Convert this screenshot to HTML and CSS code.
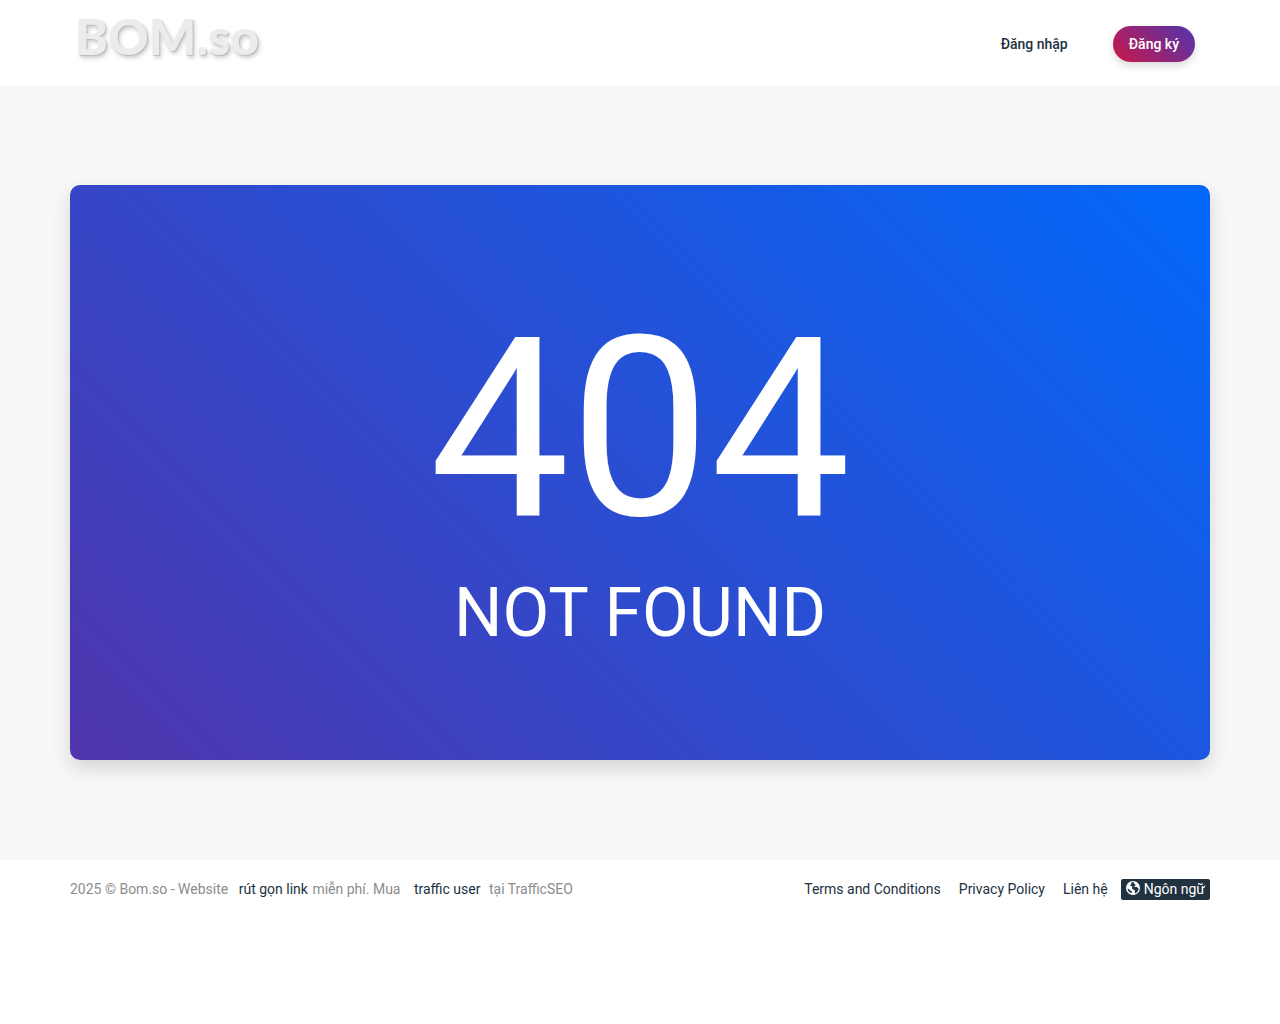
FILE: index.html
```html
<!DOCTYPE html>
<html lang="vi">
<head>
    <meta charset="UTF-8">
    <meta name="viewport" content="width=device-width, initial-scale=1.0">
    <title>404 Not Found - Bom.so</title>
    <link rel="stylesheet" href="styles.css">
</head>
<body>
    <header class="header">
        <div class="container header-inner">
            <a href="#" class="logo">BOM.so</a>
            <nav class="nav">
                <a href="#" class="nav-link">Đăng nhập</a>
                <a href="#" class="btn-register">Đăng ký</a>
            </nav>
        </div>
    </header>

    <main class="main">
        <div class="container">
            <div class="error-box">
                <h1>404</h1>
                <h2>NOT FOUND</h2>
            </div>
        </div>
    </main>

    <footer class="container footer">
        <div class="copyright">
            2025 © Bom.so - Website <a href="#" class="link-shorten">rút gọn link</a> miễn phí. Mua <a href="#" class="link-traffic">traffic user</a> tại TrafficSEO
        </div>
        <div class="footer-links">
            <a href="#">Terms and Conditions</a>
            <a href="#">Privacy Policy</a>
            <a href="#">Liên hệ</a>
            <button type="button" class="btn-lang">
                <svg class="globe" viewBox="0 0 16 16" aria-hidden="true">
                    <circle cx="8" cy="8" r="8" fill="#fff"/>
                    <path fill="#22313f" d="M6.2 1.6 8 1.2l1.6.9-.6 1.1 1.5.5.4 1.3-1.5.9.4 1 1.9-.2 1.7.9 1.2 1.6-.9 2.1-1.8 2.1-1.5.8-.5-1.4.5-1.5-1.1-1.4-1.7-.5-.9-1.5.6-1.6L6.2 5.6l-1.1.3-.3-1.5 1.3-.8zM1.8 8.6l1.7.7 1.4 1.5 1.8 1-.2 1.7-1.3.2-1.8-1.4-1.1-1.5z"/>
                </svg>
                Ngôn ngữ
            </button>
        </div>
    </footer>
</body>
</html>
```

FILE: styles.css
```css
* {
    box-sizing: border-box;
}

body {
    margin: 0;
    background-color: #fff;
    color: #8c8c8c;
    font-family: Roboto, 'Liberation Sans', sans-serif;
    font-size: 14px;
    line-height: 20px;
}

a {
    color: #22313f;
    text-decoration: none;
}

.container {
    width: 100%;
    max-width: 1140px;
    margin: 0 auto;
}

.header-inner {
    display: flex;
    justify-content: space-between;
    align-items: flex-start;
    height: 85px;
}

.logo {
    padding: 6px 5px;
    color: #ececef;
    font-family: Lato, sans-serif;
    font-size: 50px;
    font-weight: 900;
    line-height: 60px;
    text-shadow: 1px 1px 1px #bcbcc0, 2px 3px 4px rgba(0, 0, 0, 0.2);
}

.nav {
    display: flex;
    align-items: center;
    gap: 45px;
    padding: 26px 15px 0 0;
    font-weight: 500;
}

.btn-register {
    padding: 8px 16px;
    border-radius: 18px;
    background: linear-gradient(45deg, #c9184a, #5035ae);
    color: #fff;
    box-shadow: 0 4px 8px rgba(0, 0, 0, 0.15);
}

.main {
    padding: 100px 0;
    background-color: #f8f8f8;
}

.error-box {
    padding: 120px 20px 113px;
    border-radius: 10px;
    background: linear-gradient(45deg, #5035ac, #0168fa);
    box-shadow: 0 8px 20px rgba(0, 0, 0, 0.15);
    color: #fff;
    text-align: center;
}

h1,
h2 {
    margin: 0;
    font-weight: 400;
}

h1 {
    margin-bottom: 24px;
    font-size: 250px;
    line-height: 250px;
}

h2 {
    font-size: 68px;
    line-height: 68px;
}

.footer {
    display: flex;
    justify-content: space-between;
    align-items: flex-start;
    padding: 19px 0;
}

.link-shorten {
    margin-left: 7px;
    margin-right: 1px;
}

.link-traffic {
    margin: 0 5px 0 10px;
}

.footer-links {
    display: flex;
    gap: 18px;
}

.btn-lang {
    display: flex;
    align-items: flex-start;
    gap: 4px;
    margin-left: -5px;
    padding: 0 5px;
    border: none;
    border-radius: 2px;
    background-color: #22313f;
    color: #fff;
    font: inherit;
    line-height: 21px;
    cursor: pointer;
}

.globe {
    width: 14px;
    height: 14px;
    margin-top: 2px;
}
```
